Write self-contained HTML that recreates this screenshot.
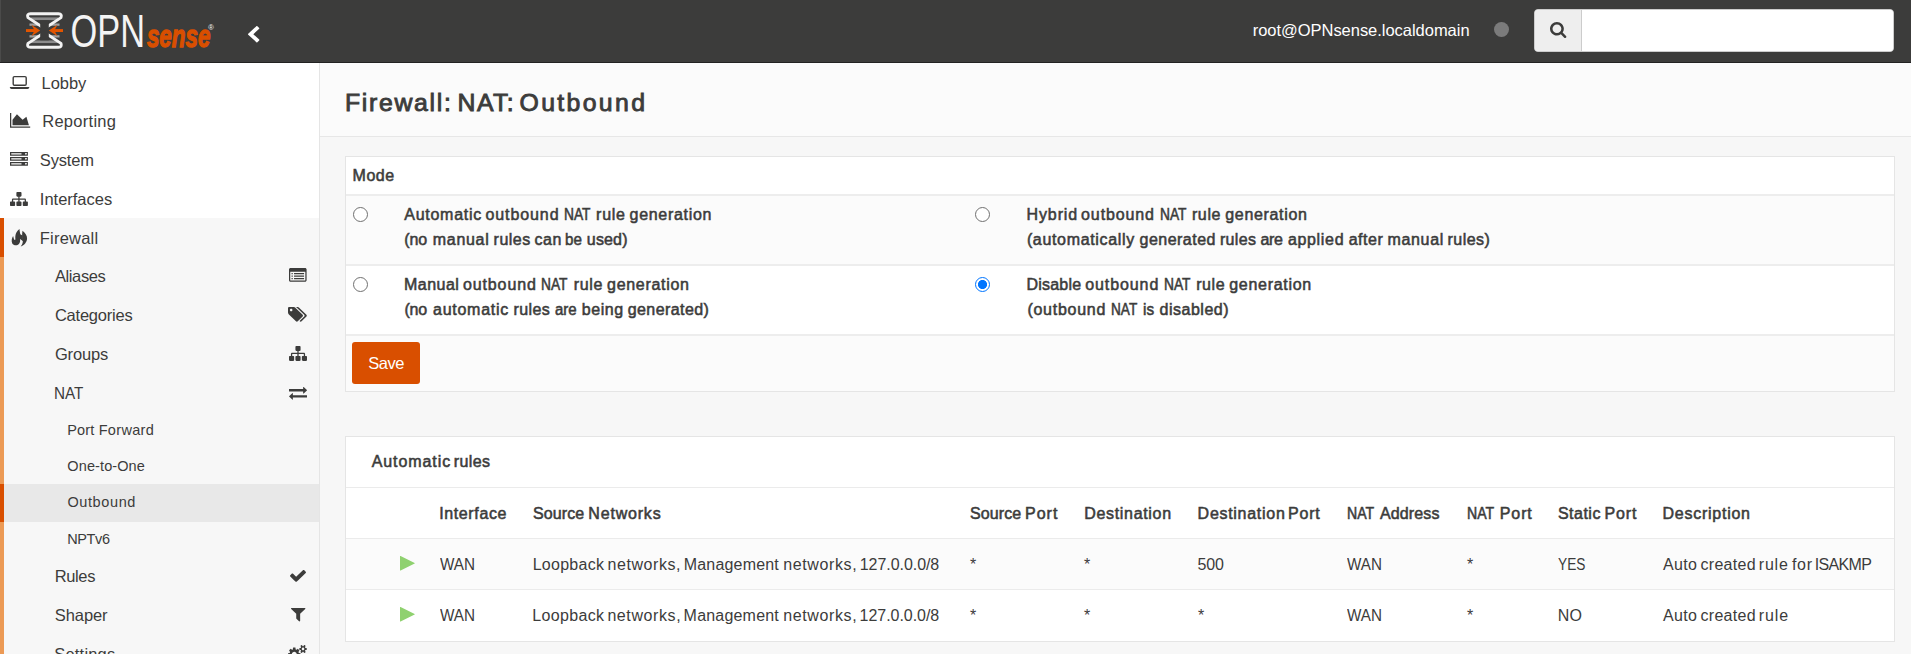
<!DOCTYPE html>
<html lang="en">
<head>
<meta charset="utf-8">
<title>Firewall: NAT: Outbound | OPNsense</title>
<style>
*{box-sizing:border-box;margin:0;padding:0}
html,body{width:1911px;height:654px;overflow:hidden}
body{font-family:"Liberation Sans",sans-serif;font-size:16px;color:#3c3c3b;background:#f7f7f7;position:relative}
svg{display:block}
svg.ic{position:absolute;overflow:visible}
/* ---------- top bar ---------- */
#topbar{position:absolute;left:0;top:0;width:1911px;height:63px;background:#3c3c3b;border-bottom:1px solid #222}
#logo{position:absolute;left:0;top:0}
#topbar:before{content:"";position:absolute;left:0;top:0;width:1px;height:62px;background:#4b4b4a}
#user{position:absolute;left:1253px;top:19px;height:22px;line-height:22px;color:#fff;font-size:16.5px;white-space:nowrap;letter-spacing:-0.38px}
#dot{position:absolute;left:1493.7px;top:21.7px;width:15.6px;height:15.6px;border-radius:50%;background:#7b7b7b}
#search{position:absolute;left:1534px;top:9px;width:360px;height:43px;border-radius:4px;background:#fff;border:1px solid #ccc;overflow:hidden}
#q{position:absolute;left:47px;top:0;width:311px;height:41px;border:0;outline:0;background:#fff;font:inherit;padding:0 12px}
#search .addon{position:absolute;left:0;top:0;width:47px;height:41px;background:#eee;border-right:1px solid #ccc}
/* ---------- sidebar ---------- */
#side{position:absolute;left:0;top:63px;width:320px;height:591px;background:#fff;border-right:1px solid #e5e5e5;overflow:hidden}
#side ul{list-style:none}
#side li.l1{height:38.75px;position:relative}
#side li.l1 span.t{position:absolute;left:42px;top:0;line-height:41px;white-space:nowrap;font-size:16.5px}
#side li.l1 svg{position:absolute}
#fw{background:#f7f7f7;border-left:4px solid #d94f00}
#fwsub{background:#f7f7f7;border-left:4px solid #ec9a55;height:420px}
#fwsub li.l2{height:38.75px;position:relative}
#fwsub li.l2 span.t{position:absolute;left:51px;top:0;line-height:41px;white-space:nowrap;font-size:16.5px}
#fwsub li.l2 svg{position:absolute}
#fwsub li.l3{height:36.25px;position:relative}
#fwsub li.l3 span.t{position:absolute;left:64px;top:0;line-height:36px;white-space:nowrap;font-size:14.5px}
#fwsub li.act:before{content:"";position:absolute;left:-4px;top:-0.25px;width:320px;height:37.75px;background:#e8e8e8;border-left:4px solid #d94f00}
/* ---------- content ---------- */
#head{position:absolute;left:320px;top:63px;width:1591px;height:74px;background:#fbfbfb;border-bottom:1px solid #e7e7e7}
#head h1{position:absolute;left:26px;top:21.5px;font-size:24.8px;line-height:36px;font-weight:normal;-webkit-text-stroke:0.9px #3c3c3b;white-space:nowrap}
.panel{position:absolute;left:345px;width:1550px;background:#fff;border:1px solid #e5e5e5}
.row{position:relative;border-bottom:2px solid #ededed}
.row.alt{background:#fbfbfb}
b,strong,th{font-weight:normal;-webkit-text-stroke:0.55px #3c3c3b}
.tx{position:absolute;white-space:nowrap;line-height:25px}
.radio{position:absolute;width:15px;height:15px;border-radius:50%;border:1.3px solid #707070;background:#fff;-webkit-appearance:none;appearance:none;margin:0;outline:0}
.radio:checked{border:1.9px solid #0075ff;background:radial-gradient(circle at 50% 50%,#0075ff 0,#0075ff 4.2px,#fff 4.9px)}
#save{position:absolute;left:6px;top:6px;width:68px;height:42px;border:0;border-radius:3px;background:#d94f00;color:#fff;text-align:center;line-height:43px;font-size:16.5px;font-family:inherit;padding:0;display:block}
table{border-collapse:collapse;position:absolute;left:0;top:50px;width:1548px;table-layout:fixed}
th,td{text-align:left;white-space:nowrap;height:51px;border-top:1px solid #ebebeb;padding:1px 0 0 0;vertical-align:top;line-height:49px;overflow:visible}
tr.alt td{background:#fbfbfb}
#x2,#x3,#x6,#x7,#x14{margin-top:-1px}#x8,#x15,#x16{margin-top:-0.5px}
/*LS-START*/
#x1{letter-spacing:-0.063px;margin-left:-0.40px}
#x2{letter-spacing:0.275px;margin-left:-0.81px}
#x3{letter-spacing:-0.147px;margin-left:-0.23px}
#x4{letter-spacing:-0.012px;margin-left:-0.17px}
#x5{letter-spacing:0.198px;margin-left:-0.17px}
#x6{letter-spacing:-0.401px;margin-left:-0.02px}
#x7{letter-spacing:-0.223px;margin-left:-0.11px}
#x8{letter-spacing:-0.125px;margin-left:-0.14px}
#x11{letter-spacing:0.104px;margin-left:-0.66px}
#x12{letter-spacing:0.610px;margin-left:-0.59px}
#x13{letter-spacing:-0.358px;margin-left:-0.86px}
#x14{letter-spacing:-0.373px;margin-left:-0.31px}
#x15{letter-spacing:-0.073px;margin-left:-0.26px}
#x16{letter-spacing:0.189px;margin-left:-0.72px}
#x17{letter-spacing:0.539px;margin-left:-0.49px}
#x27{letter-spacing:0.634px;text-indent:-0.86px}
#x30{letter-spacing:0.681px;text-indent:0.20px}
#x35{letter-spacing:0.746px;text-indent:-0.49px}
#x40{letter-spacing:-0.069px;text-indent:-0.59px}
#user{letter-spacing:-0.032px;margin-left:-0.29px}
#save{letter-spacing:-0.482px;margin-left:0.20px}
#x18w0{letter-spacing:0.733px;margin-left:0.27px}
#x18w1{letter-spacing:0.915px;margin-left:-1.09px}
#x18w2{letter-spacing:0.000px;margin-left:-0.31px;display:inline-block;transform:scaleX(0.8606);transform-origin:0 50%;margin-right:-4.30px}
#x18w3{letter-spacing:0.721px;margin-left:1.53px}
#x18w4{letter-spacing:0.699px;margin-left:-0.59px}
#x19w0{letter-spacing:-0.114px;margin-left:0.34px}
#x19w1{letter-spacing:0.708px;margin-left:1.20px}
#x19w2{letter-spacing:0.465px;margin-left:-0.36px}
#x19w3{letter-spacing:0.567px;margin-left:-0.53px}
#x19w4{letter-spacing:0.000px;margin-left:-1.56px;display:inline-block;transform:scaleX(0.9462);transform-origin:0 50%;margin-right:-0.96px}
#x19w5{letter-spacing:0.150px;margin-left:0.60px}
#x20w0{letter-spacing:0.882px;margin-left:-0.46px}
#x20w1{letter-spacing:0.891px;margin-left:-1.49px}
#x20w2{letter-spacing:0.000px;margin-left:0.35px;display:inline-block;transform:scaleX(0.8605);transform-origin:0 50%;margin-right:-4.30px}
#x20w3{letter-spacing:0.623px;margin-left:1.22px}
#x20w4{letter-spacing:0.675px;margin-left:-0.30px}
#x21w0{letter-spacing:0.660px;margin-left:-0.13px}
#x21w1{letter-spacing:0.484px;margin-left:0.25px}
#x21w2{letter-spacing:0.345px;margin-left:-0.54px}
#x21w3{letter-spacing:-0.375px;margin-left:-0.18px}
#x21w4{letter-spacing:0.674px;margin-left:0.89px}
#x21w5{letter-spacing:0.542px;margin-left:-0.02px}
#x21w6{letter-spacing:0.665px;margin-left:-0.38px}
#x21w7{letter-spacing:0.478px;margin-left:-0.88px}
#x22w0{letter-spacing:0.493px;margin-left:-0.05px}
#x22w1{letter-spacing:0.902px;margin-left:-0.97px}
#x22w2{letter-spacing:0.000px;margin-left:-0.16px;display:inline-block;transform:scaleX(0.8602);transform-origin:0 50%;margin-right:-4.31px}
#x22w3{letter-spacing:0.653px;margin-left:1.69px}
#x22w4{letter-spacing:0.693px;margin-left:-0.44px}
#x23w0{letter-spacing:-0.146px;margin-left:0.40px}
#x23w1{letter-spacing:0.715px;margin-left:1.57px}
#x23w2{letter-spacing:0.433px;margin-left:0.03px}
#x23w3{letter-spacing:0.000px;margin-left:0.10px;display:inline-block;transform:scaleX(0.9364);transform-origin:0 50%;margin-right:-1.47px}
#x23w4{letter-spacing:0.528px;margin-left:0.94px}
#x23w5{letter-spacing:0.426px;margin-left:-0.36px}
#x24w0{letter-spacing:0.184px;margin-left:-0.40px}
#x24w1{letter-spacing:0.898px;margin-left:-0.44px}
#x24w2{letter-spacing:0.000px;margin-left:0.18px;display:inline-block;transform:scaleX(0.8601);transform-origin:0 50%;margin-right:-4.31px}
#x24w3{letter-spacing:0.612px;margin-left:1.34px}
#x24w4{letter-spacing:0.704px;margin-left:-0.49px}
#x25w0{letter-spacing:0.729px;margin-left:0.40px}
#x25w1{letter-spacing:0.000px;margin-left:0.51px;display:inline-block;transform:scaleX(0.8502);transform-origin:0 50%;margin-right:-4.61px}
#x25w2{letter-spacing:0.000px;margin-left:1.84px;display:inline-block;transform:scaleX(0.9561);transform-origin:0 50%;margin-right:-0.51px}
#x25w3{letter-spacing:0.512px;margin-left:0.55px}
#x26w0{letter-spacing:0.916px;margin-left:0.70px}
#x26w1{letter-spacing:0.438px;margin-left:-1.87px}
#x28w0{letter-spacing:0.111px;margin-left:-0.08px}
#x28w1{letter-spacing:0.804px;margin-left:-0.42px}
#x29w0{letter-spacing:0.106px;margin-left:-0.08px}
#x29w1{letter-spacing:1.026px;margin-left:-0.73px}
#x31w0{letter-spacing:0.712px;margin-left:-0.40px}
#x31w1{letter-spacing:0.769px;margin-left:-1.89px}
#x32w0{letter-spacing:0.000px;margin-left:-0.09px;display:inline-block;transform:scaleX(0.8814);transform-origin:0 50%;margin-right:-3.65px}
#x32w1{letter-spacing:0.137px;margin-left:1.43px}
#x33w0{letter-spacing:0.000px;margin-left:-0.25px;display:inline-block;transform:scaleX(0.8814);transform-origin:0 50%;margin-right:-3.66px}
#x33w1{letter-spacing:0.901px;margin-left:1.41px}
#x34w0{letter-spacing:0.488px;margin-left:-0.08px}
#x34w1{letter-spacing:0.809px;margin-left:-0.72px}
#x37w0{letter-spacing:0.283px;margin-left:-0.37px}
#x37w1{letter-spacing:0.577px;margin-left:-1.30px}
#x37w2{letter-spacing:0.185px;margin-left:-1.88px}
#x37w3{letter-spacing:0.617px;margin-left:-0.23px}
#x37w4{letter-spacing:-0.052px;margin-left:-1.96px}
#x46w0{letter-spacing:0.329px;margin-left:-0.67px}
#x46w1{letter-spacing:0.591px;margin-left:-1.46px}
#x46w2{letter-spacing:0.199px;margin-left:-2.02px}
#x46w3{letter-spacing:0.616px;margin-left:-0.24px}
#x46w4{letter-spacing:-0.043px;margin-left:-2.08px}
#x44w0{letter-spacing:0.362px;margin-left:-0.05px}
#x44w1{letter-spacing:0.290px;margin-left:-1.30px}
#x44w2{letter-spacing:0.832px;margin-left:-1.62px}
#x44w3{letter-spacing:0.709px;margin-left:-1.29px}
#x44w4{letter-spacing:-0.628px;margin-left:-2.56px}
#x53w0{letter-spacing:0.351px;margin-left:-0.03px}
#x53w1{letter-spacing:0.281px;margin-left:-1.26px}
#x53w2{letter-spacing:0.874px;margin-left:-1.58px}
#h1w0{letter-spacing:1.707px;margin-left:-1.07px}
#h1w1{letter-spacing:1.397px;margin-left:-1.91px}
#h1w2{letter-spacing:2.342px;margin-left:-2.38px}
#x10w0{letter-spacing:0.178px;margin-left:-0.81px}
#x10w1{letter-spacing:0.328px;margin-left:0.11px}
#x9w0{letter-spacing:0.000px;margin-left:-0.59px;display:inline-block;transform:scaleX(0.9261);transform-origin:0 50%;margin-right:-2.35px}
#x36w0{letter-spacing:0.000px;margin-left:-0.19px;display:inline-block;transform:scaleX(0.9553);transform-origin:0 50%;margin-right:-1.64px}
#x41w0{letter-spacing:0.000px;margin-left:-0.01px;display:inline-block;transform:scaleX(0.9526);transform-origin:0 50%;margin-right:-1.74px}
#x43w0{letter-spacing:0.000px;margin-left:-0.48px;display:inline-block;transform:scaleX(0.8559);transform-origin:0 50%;margin-right:-4.61px}
#x45w0{letter-spacing:0.000px;margin-left:-0.19px;display:inline-block;transform:scaleX(0.9557);transform-origin:0 50%;margin-right:-1.63px}
#x50w0{letter-spacing:0.000px;margin-left:-0.01px;display:inline-block;transform:scaleX(0.9527);transform-origin:0 50%;margin-right:-1.74px}
#x52w0{letter-spacing:0.265px;margin-left:-0.34px}
/*LS-END*/
</style>
</head>
<body>

<div id="topbar">
  <svg id="logo" width="320" height="62" viewBox="0 0 320 62">
    <g fill="#8c8c8c"><rect x="31" y="17.4" width="27" height="2.7"/><rect x="31" y="40.4" width="27" height="2.7"/></g>
    <g fill="#a0a0a0"><rect x="29.5" y="23.5" width="9" height="2.3"/><rect x="50.5" y="23.5" width="9" height="2.3"/><rect x="29.5" y="35.2" width="9" height="2.3"/><rect x="50.5" y="35.2" width="9" height="2.3"/></g>
    <g fill="none" stroke="#f2f2f2" stroke-width="2.9" stroke-linejoin="round" stroke-linecap="butt">
      <path d="M42.6 27.2 L28 17.6 Q26.4 13.7 30.5 13.7 L58.5 13.7 Q62.3 13.7 61 17.6 L46.4 27.2"/>
      <path d="M42.6 33.8 L28 43.4 Q26.4 47.3 30.5 47.3 L58.5 47.3 Q62.3 47.3 61 43.4 L46.4 33.8"/>
    </g>
    <rect x="40.2" y="20.4" width="8.6" height="19.9" fill="#3c3c3b"/>
    <g fill="#e25500"><rect x="26" y="29.1" width="11" height="2.9"/><path d="M31.4 24.8 L40.2 30.5 L31.4 36.3 L34.6 30.5Z"/><rect x="52" y="29.1" width="11" height="2.9"/><path d="M57.6 24.8 L48.8 30.5 L57.6 36.3 L54.4 30.5Z"/></g>
    <text font-family="Liberation Sans, sans-serif"><tspan x="70.5" y="46.8" font-size="46" fill="#f4f4f4" textLength="74.5" lengthAdjust="spacingAndGlyphs">OPN</tspan><tspan x="146.9" y="46.6" font-size="31.8" font-weight="bold" font-style="italic" fill="#d94f00" stroke="#d94f00" stroke-width="1.3" textLength="63.6" lengthAdjust="spacingAndGlyphs">sense</tspan></text>
    <text x="208.2" y="29.6" font-family="Liberation Sans, sans-serif" font-size="7.5" fill="#fff">®</text>
  </svg>
  <svg class="ic" style="left:247.80px;top:25.70px;width:11.40px;height:16.40px" viewBox="154 -1510 1036 1612" preserveAspectRatio="none"><path fill="#ffffff" transform="scale(1,-1)" d="M1171 1235C1196 1260 1196 1300 1171 1325L1005 1491C980 1516 940 1516 915 1491L173 749C148 724 148 684 173 659L915 -83C940 -108 980 -108 1005 -83L1171 83C1196 108 1196 148 1171 173L640 704L1171 1235Z"/></svg>
  <div id="user">root@OPNsense.localdomain</div>
  <div id="dot"></div>
  <div id="search"><div class="addon"></div><input type="text" id="q" aria-label="Search"><svg class="ic" style="left:15.20px;top:12.20px;width:16.40px;height:16.00px" viewBox="0 -1408 1664 1664" preserveAspectRatio="none"><path fill="#3c3c3b" transform="scale(1,-1)" d="M1152 704C1152 457 951 256 704 256C457 256 256 457 256 704C256 951 457 1152 704 1152C951 1152 1152 951 1152 704ZM1664 -128C1664 -94 1650 -61 1627 -38L1284 305C1365 422 1408 562 1408 704C1408 1093 1093 1408 704 1408C315 1408 0 1093 0 704C0 315 315 0 704 0C846 0 986 43 1103 124L1446 -218C1469 -242 1502 -256 1536 -256C1606 -256 1664 -198 1664 -128Z"/></svg></div>
</div>

<div id="side">

  <ul>
    <li class="l1"><span id="x1" class="t">Lobby</span></li>
    <li class="l1"><span id="x2" class="t" style="left:43px">Reporting</span></li>
    <li class="l1"><span id="x3" class="t" style="left:40px">System</span></li>
    <li class="l1"><span id="x4" class="t" style="left:40px">Interfaces</span></li>
    <li class="l1" id="fw"><span id="x5" class="t" style="left:36px">Firewall</span></li>
  </ul>
  <ul id="fwsub">
    <li class="l2"><span id="x6" class="t">Aliases</span></li>
    <li class="l2"><span id="x7" class="t">Categories</span></li>
    <li class="l2"><span id="x8" class="t">Groups</span></li>
    <li class="l2"><span id="x9" class="t"><span id="x9w0">NAT</span></span></li>
    <li class="l3"><span id="x10" class="t"><span id="x10w0">Port</span> <span id="x10w1">Forward</span></span></li>
    <li class="l3"><span id="x11" class="t">One-to-One</span></li>
    <li class="l3 act"><span id="x12" class="t">Outbound</span></li>
    <li class="l3"><span id="x13" class="t">NPTv6</span></li>
    <li class="l2"><span id="x14" class="t">Rules</span></li>
    <li class="l2"><span id="x15" class="t">Shaper</span></li>
    <li class="l2"><span id="x16" class="t">Settings</span></li>
  </ul>
  <svg class="ic" style="left:9px;top:12px;width:22px;height:15px" viewBox="9 75 22 15"><rect x="13.2" y="76.6" width="13" height="8.7" rx="1.2" fill="none" stroke="#3c3c3b" stroke-width="1.4"/><path d="M9.9 87h19.3v0.6q0 1.4-1.6 1.4h-16.1q-1.6 0-1.6-1.4z" fill="#3c3c3b"/></svg>
  <svg class="ic" style="left:10.20px;top:50.00px;width:20.20px;height:14.80px" viewBox="0 -1408 2048 1536" preserveAspectRatio="none"><path fill="#3c3c3b" transform="scale(1,-1)" d="M2048 0H128V1408H0V-128H2048ZM1664 1024 1280 704 704 1280 256 704V128H1920Z"/></svg>
  <svg class="ic" style="left:9.90px;top:89.20px;width:17.90px;height:13.70px" viewBox="0 -1408 1792 1408" preserveAspectRatio="none"><path fill="#3c3c3b" transform="scale(1,-1)" d="M128 128V256H1152V128ZM128 640V768H1152V640ZM1696 192C1696 139 1653 96 1600 96C1547 96 1504 139 1504 192C1504 245 1547 288 1600 288C1653 288 1696 245 1696 192ZM128 1152V1280H1152V1152ZM1696 704C1696 651 1653 608 1600 608C1547 608 1504 651 1504 704C1504 757 1547 800 1600 800C1653 800 1696 757 1696 704ZM1696 1216C1696 1163 1653 1120 1600 1120C1547 1120 1504 1163 1504 1216C1504 1269 1547 1312 1600 1312C1653 1312 1696 1269 1696 1216ZM1792 384H0V0H1792ZM1792 896H0V512H1792ZM1792 1408H0V1024H1792Z"/></svg>
  <svg class="ic" style="left:9.90px;top:128.50px;width:17.90px;height:14.10px" viewBox="0 -1408 1792 1536" preserveAspectRatio="none"><path fill="#3c3c3b" transform="scale(1,-1)" d="M1792 288C1792 341 1749 384 1696 384H1600V576C1600 646 1542 704 1472 704H960V896H1056C1109 896 1152 939 1152 992V1312C1152 1365 1109 1408 1056 1408H736C683 1408 640 1365 640 1312V992C640 939 683 896 736 896H832V704H320C250 704 192 646 192 576V384H96C43 384 0 341 0 288V-32C0 -85 43 -128 96 -128H416C469 -128 512 -85 512 -32V288C512 341 469 384 416 384H320V576H832V384H736C683 384 640 341 640 288V-32C640 -85 683 -128 736 -128H1056C1109 -128 1152 -85 1152 -32V288C1152 341 1109 384 1056 384H960V576H1472V384H1376C1323 384 1280 341 1280 288V-32C1280 -85 1323 -128 1376 -128H1696C1749 -128 1792 -85 1792 -32Z"/></svg>
  <svg class="ic" style="left:6px;top:161px;width:28px;height:28px" viewBox="0 0 654 654"><g fill="#3c3c3b"><path d="M315 116C262 150 210 230 218 340L218 370L190 370L166 281C136 330 120 400 146 454C170 494 232 510 280 484C314 464 334 420 330 372C328 330 334 300 336 270C338 230 318 180 315 116Z"/><path d="M385 160C452 208 497 280 492 342C487 422 430 492 343 524C390 472 402 420 387 370C377 330 370 250 385 160Z"/><path d="M318 232L386 268L402 404L328 352Z"/></g></svg>
  <svg class="ic" style="left:289.00px;top:205.20px;width:17.60px;height:13.70px" viewBox="0 -1408 1792 1408" preserveAspectRatio="none"><path fill="#3c3c3b" transform="scale(1,-1)" d="M384 352C384 369 369 384 352 384H288C271 384 256 369 256 352V288C256 271 271 256 288 256H352C369 256 384 271 384 288ZM384 608C384 625 369 640 352 640H288C271 640 256 625 256 608V544C256 527 271 512 288 512H352C369 512 384 527 384 544ZM384 864C384 881 369 896 352 896H288C271 896 256 881 256 864V800C256 783 271 768 288 768H352C369 768 384 783 384 800ZM1536 352C1536 369 1521 384 1504 384H544C527 384 512 369 512 352V288C512 271 527 256 544 256H1504C1521 256 1536 271 1536 288ZM1536 608C1536 625 1521 640 1504 640H544C527 640 512 625 512 608V544C512 527 527 512 544 512H1504C1521 512 1536 527 1536 544ZM1536 864C1536 881 1521 896 1504 896H544C527 896 512 881 512 864V800C512 783 527 768 544 768H1504C1521 768 1536 783 1536 800ZM1664 160C1664 143 1649 128 1632 128H160C143 128 128 143 128 160V992C128 1009 143 1024 160 1024H1632C1649 1024 1664 1009 1664 992V160ZM1792 1248C1792 1336 1720 1408 1632 1408H160C72 1408 0 1336 0 1248V160C0 72 72 0 160 0H1632C1720 0 1792 72 1792 160Z"/></svg>
  <svg class="ic" style="left:288.20px;top:243.90px;width:18.80px;height:14.70px" viewBox="0 -1408 1899 1515" preserveAspectRatio="none"><path fill="#3c3c3b" transform="scale(1,-1)" d="M448 1088C448 1017 391 960 320 960C249 960 192 1017 192 1088C192 1159 249 1216 320 1216C391 1216 448 1159 448 1088ZM1515 512C1515 546 1501 579 1478 603L763 1317C712 1368 615 1408 544 1408H128C58 1408 0 1350 0 1280V864C0 793 40 696 91 646L806 -70C829 -93 862 -107 896 -107C930 -107 963 -93 987 -70L1478 422C1501 445 1515 478 1515 512ZM1899 512C1899 546 1885 579 1862 603L1147 1317C1096 1368 999 1408 928 1408H704C775 1408 872 1368 923 1317L1638 603C1661 579 1675 546 1675 512C1675 478 1661 445 1638 422L1168 -48C1202 -83 1228 -107 1280 -107C1314 -107 1347 -93 1371 -70L1862 422C1885 445 1899 478 1899 512Z"/></svg>
  <svg class="ic" style="left:289.00px;top:283.00px;width:18.00px;height:14.90px" viewBox="0 -1408 1792 1536" preserveAspectRatio="none"><path fill="#3c3c3b" transform="scale(1,-1)" d="M1792 288C1792 341 1749 384 1696 384H1600V576C1600 646 1542 704 1472 704H960V896H1056C1109 896 1152 939 1152 992V1312C1152 1365 1109 1408 1056 1408H736C683 1408 640 1365 640 1312V992C640 939 683 896 736 896H832V704H320C250 704 192 646 192 576V384H96C43 384 0 341 0 288V-32C0 -85 43 -128 96 -128H416C469 -128 512 -85 512 -32V288C512 341 469 384 416 384H320V576H832V384H736C683 384 640 341 640 288V-32C640 -85 683 -128 736 -128H1056C1109 -128 1152 -85 1152 -32V288C1152 341 1109 384 1056 384H960V576H1472V384H1376C1323 384 1280 341 1280 288V-32C1280 -85 1323 -128 1376 -128H1696C1749 -128 1792 -85 1792 -32Z"/></svg>
  <svg class="ic" style="left:289.00px;top:323.80px;width:18.00px;height:12.70px" viewBox="0 -1248 1792 1344" preserveAspectRatio="none"><path fill="#3c3c3b" transform="scale(1,-1)" d="M1792 352C1792 370 1777 384 1760 384H384V576C384 594 369 608 352 608C344 608 335 605 329 599L9 279C3 273 0 265 0 256C0 248 3 240 9 234L328 -86C335 -92 343 -96 352 -96C370 -96 384 -81 384 -64V128H1760C1777 128 1792 143 1792 160ZM1792 896C1792 904 1789 913 1783 919L1464 1238C1457 1244 1449 1248 1440 1248C1422 1248 1408 1234 1408 1216V1024H32C15 1024 0 1009 0 992V800C0 783 15 768 32 768H1408V576C1408 559 1423 544 1440 544C1448 544 1457 547 1463 553L1783 873C1789 879 1792 888 1792 896Z"/></svg>
  <svg class="ic" style="left:290.00px;top:507.00px;width:16.00px;height:11.80px" viewBox="121 -1202 1550 1188" preserveAspectRatio="none"><path fill="#3c3c3b" transform="scale(1,-1)" d="M1671 970C1671 995 1661 1020 1643 1038L1507 1174C1489 1192 1464 1202 1439 1202C1414 1202 1389 1192 1371 1174L715 517L421 812C403 830 378 840 353 840C328 840 303 830 285 812L149 676C131 658 121 633 121 608C121 583 131 558 149 540L511 178L647 42C665 24 690 14 715 14C740 14 765 24 783 42L919 178L1643 902C1661 920 1671 945 1671 970Z"/></svg>
  <svg class="ic" style="left:290.60px;top:545.40px;width:14.40px;height:13.40px" viewBox="-0 -1280 1408 1408" preserveAspectRatio="none"><path fill="#3c3c3b" transform="scale(1,-1)" d="M1403 1241C1393 1264 1370 1280 1344 1280H64C38 1280 15 1264 5 1241C-5 1217 0 1189 19 1171L512 678V192C512 175 519 159 531 147L787 -109C799 -122 815 -128 832 -128C840 -128 849 -126 857 -123C880 -113 896 -90 896 -64V678L1389 1171C1408 1189 1413 1217 1403 1241Z"/></svg>
  <svg class="ic" style="left:288.20px;top:582.00px;width:18.80px;height:19.00px" viewBox="0 -1520 1920 1761" preserveAspectRatio="none"><path fill="#3c3c3b" transform="scale(1,-1)" d="M896 640C896 499 781 384 640 384C499 384 384 499 384 640C384 781 499 896 640 896C781 896 896 781 896 640ZM1664 128C1664 58 1607 0 1536 0C1466 0 1408 57 1408 128C1408 198 1466 256 1536 256C1606 256 1664 198 1664 128ZM1664 1152C1664 1082 1607 1024 1536 1024C1466 1024 1408 1081 1408 1152C1408 1222 1466 1280 1536 1280C1606 1280 1664 1222 1664 1152ZM1280 731C1280 745 1270 758 1256 761L1104 784C1095 812 1083 839 1070 866C1098 905 1128 941 1157 980C1161 986 1164 992 1164 999C1164 1027 1046 1135 1020 1159C1014 1164 1007 1167 999 1167C992 1167 985 1165 979 1160L861 1071C837 1083 812 1094 786 1102L763 1255C761 1269 747 1280 733 1280H547C533 1280 521 1270 517 1256C504 1207 499 1152 494 1102C467 1093 442 1083 417 1070L302 1160C296 1164 289 1167 281 1167C252 1167 140 1046 120 1019C115 1013 113 1006 113 999C113 992 116 985 120 979C152 941 182 904 210 864C197 839 186 814 178 788L23 764C10 762 0 747 0 734V549C0 535 10 522 24 520L176 496C185 468 197 441 211 414C182 375 152 338 123 300C119 294 116 288 116 281C116 252 234 145 260 121C266 116 273 113 281 113C288 113 296 115 301 120L419 209C443 197 468 186 494 178L517 25C519 11 533 0 547 0H733C747 0 759 10 763 24C776 73 781 128 786 179C813 187 838 197 863 210L978 120C984 116 991 113 999 113C1028 113 1140 235 1160 262C1165 267 1167 274 1167 281C1167 289 1164 295 1160 301C1128 339 1098 376 1070 416C1083 441 1094 466 1102 492L1257 516C1270 518 1280 533 1280 546ZM1920 198C1920 213 1791 227 1771 229C1763 247 1753 265 1741 281C1750 301 1792 401 1792 419C1792 421 1791 424 1788 426C1776 433 1669 496 1664 496L1658 494C1624 460 1594 421 1566 382C1556 383 1546 384 1536 384C1526 384 1516 383 1506 382C1496 397 1421 496 1408 496C1403 496 1296 432 1284 426C1281 424 1280 421 1280 419C1280 402 1322 301 1331 281C1319 265 1309 247 1301 229C1281 227 1152 213 1152 198V58C1152 43 1281 29 1301 27C1309 8 1319 -9 1331 -25C1322 -45 1280 -146 1280 -163C1280 -165 1281 -168 1284 -170C1296 -177 1403 -241 1408 -241C1421 -241 1496 -141 1506 -126C1516 -127 1526 -128 1536 -128C1546 -128 1556 -127 1566 -126C1576 -141 1651 -241 1664 -241C1669 -241 1776 -177 1788 -170C1791 -168 1792 -166 1792 -163C1792 -145 1750 -45 1741 -25C1753 -9 1763 8 1771 27C1791 29 1920 43 1920 58ZM1920 1222C1920 1237 1791 1251 1771 1253C1763 1271 1753 1289 1741 1305C1750 1325 1792 1425 1792 1443C1792 1445 1791 1448 1788 1450C1776 1457 1669 1520 1664 1520L1658 1518C1624 1484 1594 1445 1566 1406C1556 1407 1546 1408 1536 1408C1526 1408 1516 1407 1506 1406C1496 1421 1421 1520 1408 1520C1403 1520 1296 1456 1284 1450C1281 1448 1280 1445 1280 1443C1280 1426 1322 1325 1331 1305C1319 1289 1309 1271 1301 1253C1281 1251 1152 1237 1152 1222V1082C1152 1067 1281 1053 1301 1051C1309 1032 1319 1015 1331 999C1322 979 1280 878 1280 861C1280 859 1281 856 1284 854C1296 847 1403 783 1408 783C1421 783 1496 883 1506 898C1516 897 1526 896 1536 896C1546 896 1556 897 1566 898C1576 883 1651 783 1664 783C1669 783 1776 847 1788 854C1791 856 1792 858 1792 861C1792 879 1750 979 1741 999C1753 1015 1763 1032 1771 1051C1791 1053 1920 1067 1920 1082Z"/></svg>
</div>

<div id="head"><h1 id="h1"><span id="h1w0">Firewall:</span> <span id="h1w1">NAT:</span> <span id="h1w2">Outbound</span></h1></div>

<div class="panel" id="mode" style="top:156px;height:236px">
  <div class="row" style="height:39px"><b id="x17" class="tx" style="left:7px;top:6px">Mode</b></div>
  <div class="row alt" style="height:70px">
    <input type="radio" name="mode" class="radio" style="left:7px;top:11px">
    <b id="x18" class="tx" style="left:58px;top:6px"><span id="x18w0">Automatic</span> <span id="x18w1">outbound</span> <span id="x18w2">NAT</span> <span id="x18w3">rule</span> <span id="x18w4">generation</span></b>
    <b id="x19" class="tx" style="left:58px;top:31px"><span id="x19w0">(no</span> <span id="x19w1">manual</span> <span id="x19w2">rules</span> <span id="x19w3">can</span> <span id="x19w4">be</span> <span id="x19w5">used)</span></b>
    <input type="radio" name="mode" class="radio" style="left:629px;top:11px">
    <b id="x20" class="tx" style="left:681px;top:6px"><span id="x20w0">Hybrid</span> <span id="x20w1">outbound</span> <span id="x20w2">NAT</span> <span id="x20w3">rule</span> <span id="x20w4">generation</span></b>
    <b id="x21" class="tx" style="left:681px;top:31px"><span id="x21w0">(automatically</span> <span id="x21w1">generated</span> <span id="x21w2">rules</span> <span id="x21w3">are</span> <span id="x21w4">applied</span> <span id="x21w5">after</span> <span id="x21w6">manual</span> <span id="x21w7">rules)</span></b>
  </div>
  <div class="row" style="height:70px">
    <input type="radio" name="mode" class="radio" style="left:7px;top:11px">
    <b id="x22" class="tx" style="left:58px;top:6px"><span id="x22w0">Manual</span> <span id="x22w1">outbound</span> <span id="x22w2">NAT</span> <span id="x22w3">rule</span> <span id="x22w4">generation</span></b>
    <b id="x23" class="tx" style="left:58px;top:31px"><span id="x23w0">(no</span> <span id="x23w1">automatic</span> <span id="x23w2">rules</span> <span id="x23w3">are</span> <span id="x23w4">being</span> <span id="x23w5">generated)</span></b>
    <input type="radio" name="mode" class="radio" style="left:629px;top:11px" checked>
    <b id="x24" class="tx" style="left:681px;top:6px"><span id="x24w0">Disable</span> <span id="x24w1">outbound</span> <span id="x24w2">NAT</span> <span id="x24w3">rule</span> <span id="x24w4">generation</span></b>
    <b id="x25" class="tx" style="left:681px;top:31px"><span id="x25w0">(outbound</span> <span id="x25w1">NAT</span> <span id="x25w2">is</span> <span id="x25w3">disabled)</span></b>
  </div>
  <div class="row alt" style="height:55px;border-bottom:0"><button id="save" type="button">Save</button></div>
</div>

<div class="panel" id="auto" style="top:436px;height:206px">
  <b id="x26" class="tx" style="left:25px;top:12px"><span id="x26w0">Automatic</span> <span id="x26w1">rules</span></b>
  <table>
    <colgroup><col style="width:94px"><col style="width:93px"><col style="width:437px"><col style="width:114px"><col style="width:114px"><col style="width:149px"><col style="width:120px"><col style="width:91px"><col style="width:105px"><col></colgroup>
    <tr><th></th><th id="x27">Interface</th><th id="x28"><span id="x28w0">Source</span> <span id="x28w1">Networks</span></th><th id="x29"><span id="x29w0">Source</span> <span id="x29w1">Port</span></th><th id="x30">Destination</th><th id="x31"><span id="x31w0">Destination</span> <span id="x31w1">Port</span></th><th id="x32"><span id="x32w0">NAT</span> <span id="x32w1">Address</span></th><th id="x33"><span id="x33w0">NAT</span> <span id="x33w1">Port</span></th><th id="x34"><span id="x34w0">Static</span> <span id="x34w1">Port</span></th><th id="x35">Description</th></tr>
    <tr class="alt"><td></td><td id="x36"><span id="x36w0">WAN</span></td><td id="x37"><span id="x37w0">Loopback</span> <span id="x37w1">networks,</span> <span id="x37w2">Management</span> <span id="x37w3">networks,</span> <span id="x37w4">127.0.0.0/8</span></td><td id="x38">*</td><td id="x39">*</td><td id="x40">500</td><td id="x41"><span id="x41w0">WAN</span></td><td id="x42">*</td><td id="x43"><span id="x43w0">YES</span></td><td id="x44"><span id="x44w0">Auto</span> <span id="x44w1">created</span> <span id="x44w2">rule</span> <span id="x44w3">for</span> <span id="x44w4">ISAKMP</span></td></tr>
    <tr><td></td><td id="x45"><span id="x45w0">WAN</span></td><td id="x46"><span id="x46w0">Loopback</span> <span id="x46w1">networks,</span> <span id="x46w2">Management</span> <span id="x46w3">networks,</span> <span id="x46w4">127.0.0.0/8</span></td><td id="x47">*</td><td id="x48">*</td><td id="x49">*</td><td id="x50"><span id="x50w0">WAN</span></td><td id="x51">*</td><td id="x52"><span id="x52w0">NO</span></td><td id="x53"><span id="x53w0">Auto</span> <span id="x53w1">created</span> <span id="x53w2">rule</span></td></tr>
  </table>
  <svg class="ic" style="left:54.30px;top:119.20px;width:14.90px;height:14.60px" viewBox="0 -1416 1407 1552" preserveAspectRatio="none"><path fill="#8fd16f" transform="scale(1,-1)" d="M1384 609C1415 626 1415 654 1384 671L56 1409C25 1426 0 1411 0 1376V-96C0 -131 25 -146 56 -129Z"/></svg>
  <svg class="ic" style="left:54.30px;top:170.30px;width:14.90px;height:14.60px" viewBox="0 -1416 1407 1552" preserveAspectRatio="none"><path fill="#8fd16f" transform="scale(1,-1)" d="M1384 609C1415 626 1415 654 1384 671L56 1409C25 1426 0 1411 0 1376V-96C0 -131 25 -146 56 -129Z"/></svg>
</div>

</body>
</html>
